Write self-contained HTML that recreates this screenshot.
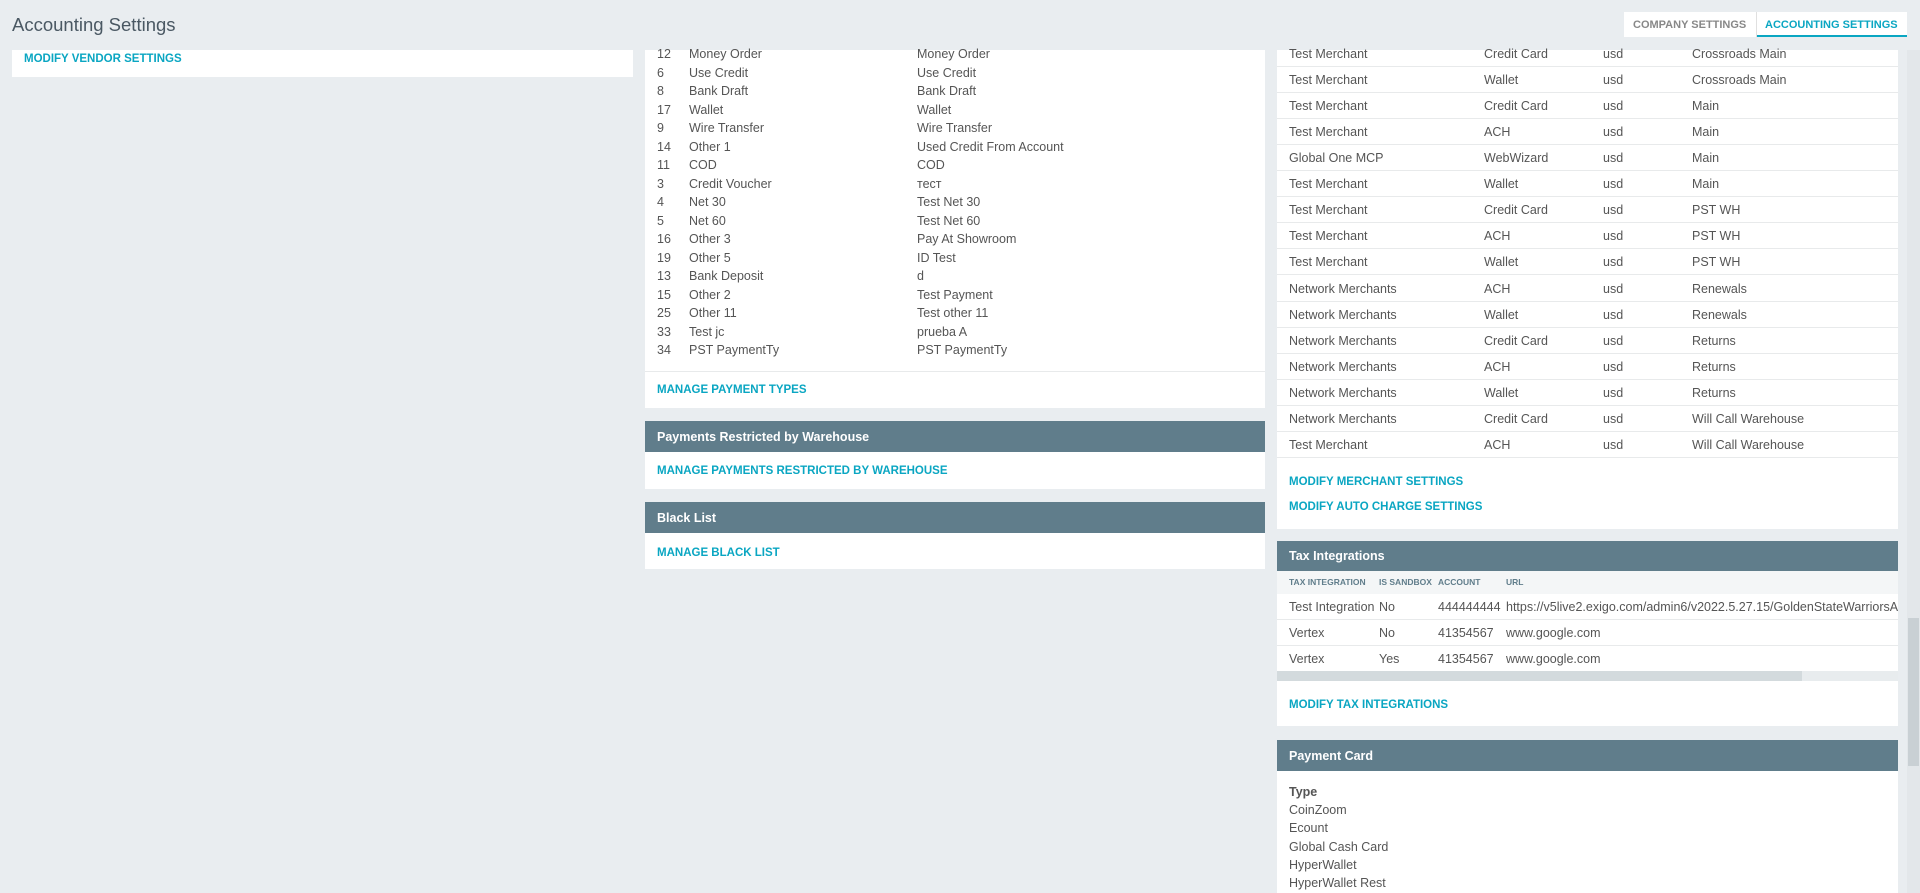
<!DOCTYPE html>
<html><head><meta charset="utf-8"><style>
*{box-sizing:border-box;margin:0;padding:0}
body{width:1920px;height:893px;overflow:hidden;background:#e9edf0;font-family:"Liberation Sans",sans-serif;font-size:12.5px;color:#555;position:relative}
.abs{position:absolute}
.panel{position:absolute;background:#fff}
.link{position:absolute;color:#0aa6c2;font-weight:bold;font-size:11.5px;white-space:nowrap}
.hdr{position:absolute;background:#607d8b;color:#fff;font-weight:bold;font-size:12.5px;padding-left:12px;display:flex;align-items:center}
.t{position:absolute;white-space:nowrap}
.row{position:absolute;left:0;right:0;height:26px;border-bottom:1px solid #e8eaeb}
</style></head><body>
<div class="t" style="left:12px;top:14px;font-size:18.5px;color:#4a5863">Accounting Settings</div>
<div class="abs" style="left:1624px;top:12px;width:283px;height:25px;background:#fff;"></div>
<div class="t" style="left:1633px;top:19px;font-size:11px;font-weight:bold;color:#888">COMPANY SETTINGS</div>
<div class="abs" style="left:1756px;top:12px;width:1px;height:25px;background:#e0e0e0"></div>
<div class="abs" style="left:1757px;top:35px;width:150px;height:2px;background:#0aa6c2"></div>
<div class="t" style="left:1765px;top:19px;font-size:11px;font-weight:bold;color:#0aa6c2">ACCOUNTING SETTINGS</div>

<div class="panel" style="left:12px;top:50px;width:621px;height:27px"></div>
<div class="link" style="left:24px;top:53px">MODIFY VENDOR SETTINGS</div>

<div class="panel" style="left:645px;top:50px;width:620px;height:358px"></div>
<div class="abs" style="left:645px;top:371px;width:620px;height:1px;background:#e8eaeb"></div>
<div id="mid"></div>
<div class="link" style="left:657px;top:384px">MANAGE PAYMENT TYPES</div>
<div class="hdr" style="left:645px;top:421px;width:620px;height:31px">Payments Restricted by Warehouse</div>
<div class="panel" style="left:645px;top:452px;width:620px;height:37px"></div>
<div class="link" style="left:657px;top:465px">MANAGE PAYMENTS RESTRICTED BY WAREHOUSE</div>
<div class="hdr" style="left:645px;top:502px;width:620px;height:31px">Black List</div>
<div class="panel" style="left:645px;top:533px;width:620px;height:36px"></div>
<div class="link" style="left:657px;top:547px">MANAGE BLACK LIST</div>

<div class="panel" style="left:1277px;top:50px;width:621px;height:479px"></div>
<div id="right"></div>
<div class="link" style="left:1289px;top:476px">MODIFY MERCHANT SETTINGS</div>
<div class="link" style="left:1289px;top:501px">MODIFY AUTO CHARGE SETTINGS</div>

<div class="hdr" style="left:1277px;top:541px;width:621px;height:30px">Tax Integrations</div>
<div class="abs" style="left:1277px;top:571px;width:621px;height:23px;background:#f4f6f7"></div>
<div class="t" style="left:1289px;top:577px;font-size:8.5px;font-weight:bold;color:#607d8b">TAX INTEGRATION</div>
<div class="t" style="left:1379px;top:577px;font-size:8.5px;font-weight:bold;color:#607d8b">IS SANDBOX</div>
<div class="t" style="left:1438px;top:577px;font-size:8.5px;font-weight:bold;color:#607d8b">ACCOUNT</div>
<div class="t" style="left:1506px;top:577px;font-size:8.5px;font-weight:bold;color:#607d8b">URL</div>
<div class="panel" style="left:1277px;top:594px;width:621px;height:77px;overflow:hidden">
<div class="row" style="top:0"><span class="t" style="left:12px;top:6px">Test Integration</span><span class="t" style="left:102px;top:6px">No</span><span class="t" style="left:161px;top:6px">444444444</span><span class="t" style="left:229px;top:6px">https://v5live2.exigo.com/admin6/v2022.5.27.15/GoldenStateWarriorsAreTheBest</span></div>
<div class="row" style="top:26px"><span class="t" style="left:12px;top:6px">Vertex</span><span class="t" style="left:102px;top:6px">No</span><span class="t" style="left:161px;top:6px">41354567</span><span class="t" style="left:229px;top:6px">www.google.com</span></div>
<div class="row" style="top:52px;border:0"><span class="t" style="left:12px;top:6px">Vertex</span><span class="t" style="left:102px;top:6px">Yes</span><span class="t" style="left:161px;top:6px">41354567</span><span class="t" style="left:229px;top:6px">www.google.com</span></div>
</div>
<div class="abs" style="left:1277px;top:671px;width:621px;height:10px;background:#e8ecee"></div>
<div class="abs" style="left:1277px;top:671px;width:525px;height:10px;background:#d3dadd"></div>
<div class="panel" style="left:1277px;top:681px;width:621px;height:45px"></div>
<div class="link" style="left:1289px;top:699px">MODIFY TAX INTEGRATIONS</div>

<div class="hdr" style="left:1277px;top:740px;width:621px;height:31px">Payment Card</div>
<div class="panel" style="left:1277px;top:771px;width:621px;height:122px"></div>
<div class="t" style="left:1289px;top:785px;font-weight:bold">Type</div>
<div class="t" style="left:1289px;top:803px">CoinZoom</div>
<div class="t" style="left:1289px;top:821px">Ecount</div>
<div class="t" style="left:1289px;top:840px">Global Cash Card</div>
<div class="t" style="left:1289px;top:858px">HyperWallet</div>
<div class="t" style="left:1289px;top:876px">HyperWallet Rest</div>

<div class="abs" style="left:1907px;top:50px;width:13px;height:843px;background:#e3e7ea"></div>
<div class="abs" style="left:1908px;top:618px;width:11px;height:148px;background:#c9d0d4"></div>

<script>
var m=[["12","Money Order","Money Order"],["6","Use Credit","Use Credit"],["8","Bank Draft","Bank Draft"],["17","Wallet","Wallet"],["9","Wire Transfer","Wire Transfer"],["14","Other 1","Used Credit From Account"],["11","COD","COD"],["3","Credit Voucher","тест"],["4","Net 30","Test Net 30"],["5","Net 60","Test Net 60"],["16","Other 3","Pay At Showroom"],["19","Other 5","ID Test"],["13","Bank Deposit","d"],["15","Other 2","Test Payment"],["25","Other 11","Test other 11"],["33","Test jc","prueba A"],["34","PST PaymentTy","PST PaymentTy"]];
var h="";m.forEach(function(r,i){var y=47+i*18.5;h+='<div class="t" style="left:657px;top:'+y+'px">'+r[0]+'</div><div class="t" style="left:689px;top:'+y+'px">'+r[1]+'</div><div class="t" style="left:917px;top:'+y+'px">'+r[2]+'</div>';});
document.getElementById("mid").innerHTML=h;
var r=[["Test Merchant","Credit Card","Crossroads Main"],["Test Merchant","Wallet","Crossroads Main"],["Test Merchant","Credit Card","Main"],["Test Merchant","ACH","Main"],["Global One MCP","WebWizard","Main"],["Test Merchant","Wallet","Main"],["Test Merchant","Credit Card","PST WH"],["Test Merchant","ACH","PST WH"],["Test Merchant","Wallet","PST WH"],["Network Merchants","ACH","Renewals"],["Network Merchants","Wallet","Renewals"],["Network Merchants","Credit Card","Returns"],["Network Merchants","ACH","Returns"],["Network Merchants","Wallet","Returns"],["Network Merchants","Credit Card","Will Call Warehouse"],["Test Merchant","ACH","Will Call Warehouse"]];
h="";r.forEach(function(x,i){var c=52.6+i*26.1;var y=c-6;h+='<div class="t" style="left:1289px;top:'+y+'px">'+x[0]+'</div><div class="t" style="left:1484px;top:'+y+'px">'+x[1]+'</div><div class="t" style="left:1603px;top:'+y+'px">usd</div><div class="t" style="left:1692px;top:'+y+'px">'+x[2]+'</div><div class="abs" style="left:1277px;width:621px;height:1px;background:#e8eaeb;top:'+(c+13)+'px"></div>';});
document.getElementById("right").innerHTML=h;
</script>
</body></html>
